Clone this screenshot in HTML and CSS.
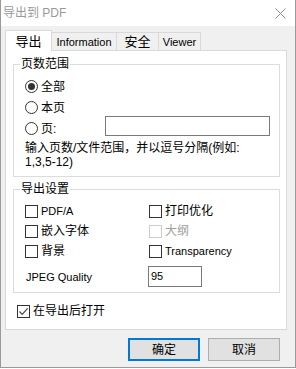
FILE: index.html
```html
<!DOCTYPE html>
<html>
<head>
<meta charset="utf-8">
<link rel="stylesheet" href="styles.css">
</head>
<body>
<div class="window">
  <div class="titlebar">
    <span class="title">导出到 PDF</span>
    <svg class="close" width="11" height="11" viewBox="0 0 11 11"><path d="M0.5 0.5L10.5 10.5M10.5 0.5L0.5 10.5" stroke="#8c8c8c" stroke-width="1" fill="none"/></svg>
  </div>
  <div class="content">
    <div class="tabs">
      <div class="tab active">导出</div>
      <div class="tab lat w-info">Information</div>
      <div class="tab w-sec">安全</div>
      <div class="tab lat w-view">Viewer</div>
    </div>
    <div class="panel">
      <div class="group g1">
        <span class="legend">页数范围</span>
        <div class="row"><span class="radio checked"></span><span>全部</span></div>
        <div class="row"><span class="radio"></span><span>本页</span></div>
        <div class="row"><span class="radio"></span><span>页:</span><span class="textbox wide"></span></div>
        <p class="hint">输入页数/文件范围，并以逗号分隔(例如:<br>1,3,5-12)</p>
      </div>
      <div class="group g2">
        <span class="legend">导出设置</span>
        <div class="opts">
          <div class="opt"><span class="box"></span><span class="lat">PDF/A</span></div>
          <div class="opt"><span class="box"></span><span>打印优化</span></div>
          <div class="opt"><span class="box"></span><span>嵌入字体</span></div>
          <div class="opt disabled"><span class="box"></span><span>大纲</span></div>
          <div class="opt"><span class="box"></span><span>背景</span></div>
          <div class="opt"><span class="box"></span><span class="lat">Transparency</span></div>
          <div class="opt last"><span class="lat jpeg">JPEG Quality</span></div>
          <div class="opt last"><span class="textbox small lat">95</span></div>
        </div>
      </div>
      <div class="opt open"><span class="box checked"><svg width="11" height="11" viewBox="0 0 11 11"><path d="M1.5 5.5L4.2 8.3L9.6 2.4" stroke="#4a4a4a" stroke-width="1.2" fill="none"/></svg></span><span>在导出后打开</span></div>
    </div>
    <div class="buttons">
      <button class="btn default">确定</button>
      <button class="btn">取消</button>
    </div>
  </div>
</div>
</body>
</html>
```
FILE: styles.css
```css
* { box-sizing: border-box; }
html, body { margin: 0; padding: 0; background: #fff; }
body {
  font-family: "Liberation Sans", "Noto Sans CJK SC", sans-serif;
  font-size: 12px;
  color: #000;
}
.window {
  width: 296px;
  height: 368px;
  border: 1px solid #9a9a9a;
  border-top: none;
  background: #f0f0f0;
  display: flex;
  flex-direction: column;
}
.titlebar {
  height: 26px;
  flex: none;
  background: #fff;
  display: flex;
  align-items: center;
  justify-content: space-between;
  padding: 0 9px 0 2px;
}
.title { color: #999; font-size: 12px; line-height: 16px; }
.close { display: block; }
.content {
  flex: 1;
  display: flex;
  flex-direction: column;
  padding: 4px 8px 6px 4px;
}
.tabs { display: flex; align-items: flex-end; height: 20px; flex: none; }
.tab {
  height: 18px;
  border: 1px solid #d9d9d9;
  border-bottom: none;
  background: #f0f0f0;
  display: flex;
  align-items: center;
  justify-content: center;
  font-size: 13px;
  line-height: 14px;
  margin-left: -1px;
}
.tab.lat { font-size: 11px; }
.tab.active {
  width: 47px;
  height: 21px;
  margin-left: 0;
  margin-bottom: -1px;
  background: #fff;
  position: relative;
  z-index: 1;
  padding-top: 1px;
}
.w-info { width: 66px; }
.w-sec { width: 43px; }
.w-view { width: 43px; }
.panel {
  height: 280px;
  flex: none;
  border: 1px solid #d9d9d9;
  background: #fff;
  padding: 13px 6px 0 7px;
  display: flex;
  flex-direction: column;
}
.group { position: relative; border: 1px solid #dcdcdc; flex: none; }
.legend {
  position: absolute;
  top: -8px;
  left: 6px;
  padding: 0 1px;
  background: #fff;
  line-height: 14px;
}
.g1 { height: 113px; padding: 11px 9px 0 11px; }
.g2 { height: 104px; margin-top: 12px; padding: 11px 0 0 11px; }
.row { display: flex; align-items: center; height: 21px; gap: 3px; line-height: 14px; }
.radio {
  width: 13px; height: 13px;
  border: 1px solid #333;
  border-radius: 50%;
  background: #fff;
  display: flex; align-items: center; justify-content: center;
  flex: none;
}
.radio.checked::after {
  content: "";
  width: 7px; height: 7px;
  border-radius: 50%;
  background: #333;
}
.textbox {
  border: 1px solid #7a7a7a;
  background: #fff;
  display: block;
}
.textbox.wide { width: 165px; height: 20px; margin-left: auto; margin-bottom: 5px; }
.hint { margin: 2px 0 0 0; line-height: 14px; }
.opts {
  display: grid;
  grid-template-columns: 124px 1fr;
  grid-template-rows: 20px 20px 20px 26px;
}
.opt { display: flex; align-items: center; gap: 3px; line-height: 14px; }
.opt.last { align-self: end; height: 21px; }
.lat { font-size: 11px; }
.box {
  width: 13px; height: 13px;
  border: 1px solid #333;
  background: #fff;
  flex: none;
  display: flex; align-items: center; justify-content: center;
}
.box svg { display: block; }
.disabled .box { border-color: #cccccc; }
.disabled span { color: #a0a0a0; }
.jpeg { margin-left: 1px; }
.textbox.small {
  width: 54px; height: 21px;
  margin-left: -1px;
  padding-left: 2px;
  line-height: 19px;
}
.open { height: 20px; margin: 8px 0 0 4px; }
.buttons {
  display: flex;
  justify-content: flex-end;
  gap: 8px;
  margin-top: 8px;
  padding-right: 7px;
}
.btn {
  width: 72px; height: 23px;
  background: #e1e1e1;
  border: 1px solid #adadad;
  font-family: "Liberation Sans", "Noto Sans CJK SC", sans-serif;
  font-size: 12px;
  line-height: 14px;
  color: #000;
  padding: 0;
  margin: 0;
}
.btn.default { border: 2px solid #0078d7; }
```
